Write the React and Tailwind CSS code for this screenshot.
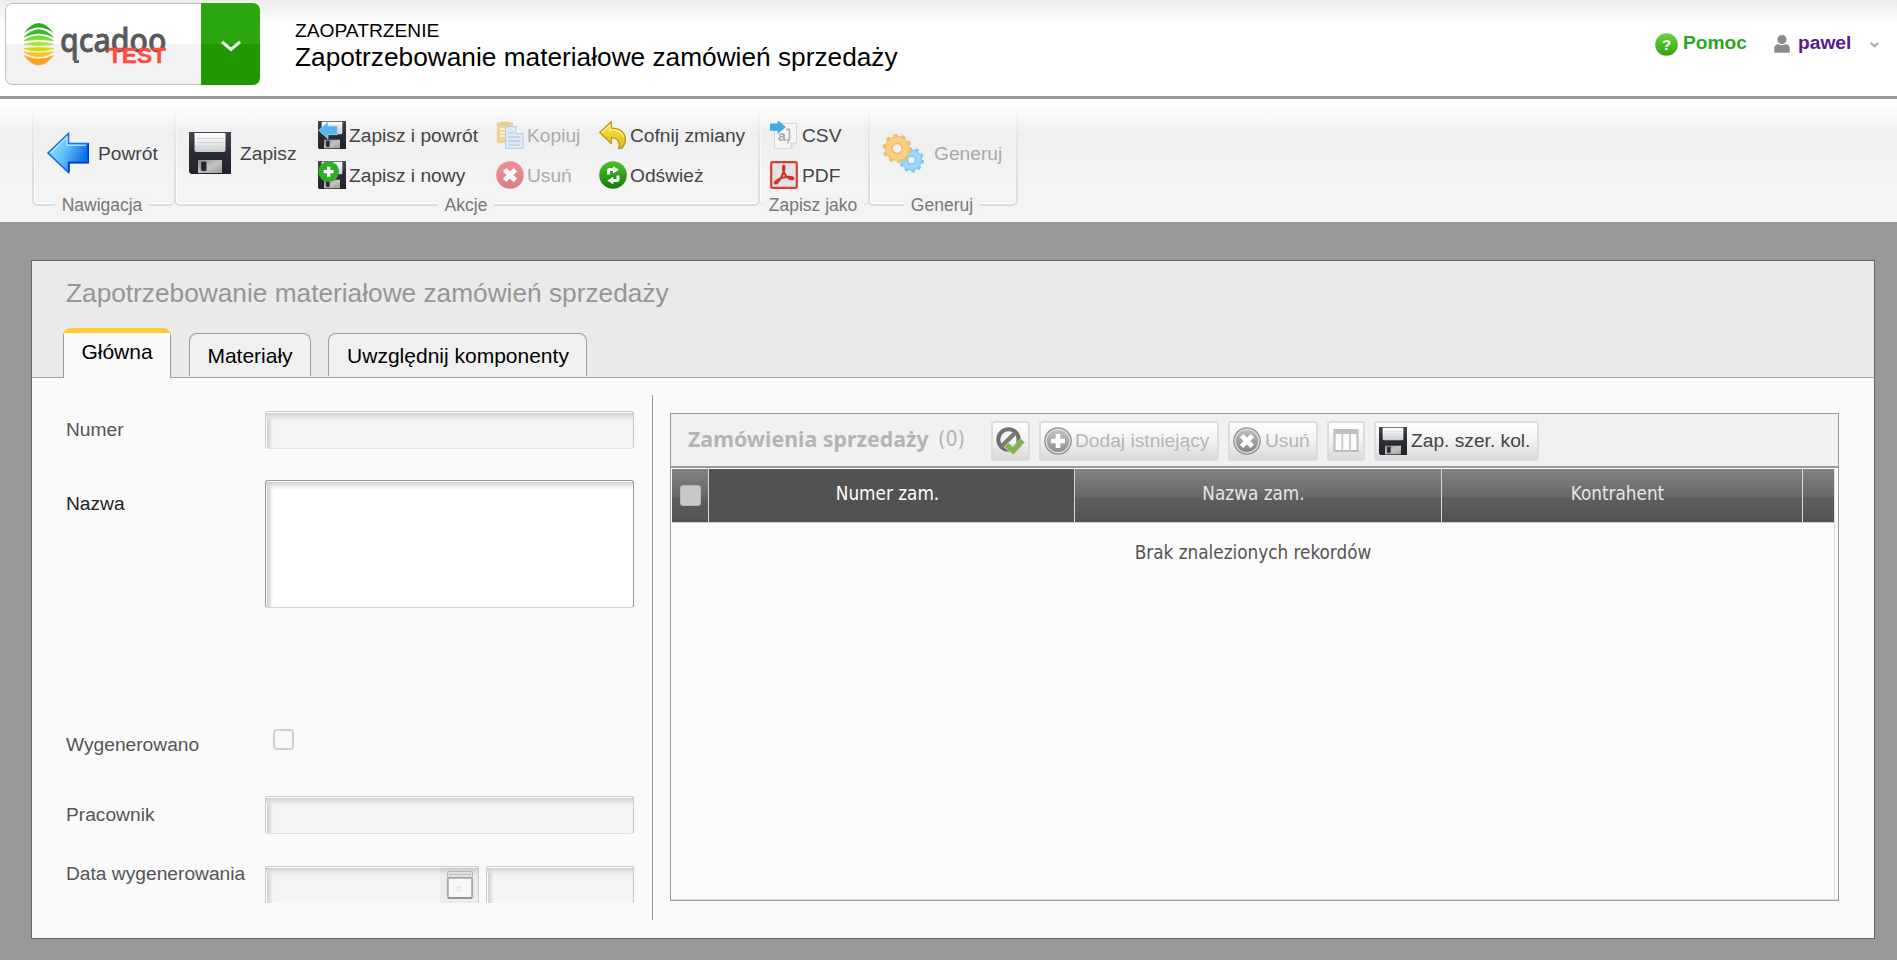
import React from "react";

function FloppyIcon({ size, children }) {
  return (
    <svg width={size} height={size} viewBox="0 0 42 42" className="shrink-0">
      <defs>
        <linearGradient id="fbody" x1="0" y1="0" x2="0" y2="1">
          <stop offset="0" stopColor="#43464e" />
          <stop offset="0.45" stopColor="#2b2e37" />
          <stop offset="1" stopColor="#20222c" />
        </linearGradient>
        <linearGradient id="flabel" x1="0" y1="0" x2="0" y2="1">
          <stop offset="0" stopColor="#ffffff" />
          <stop offset="0.5" stopColor="#ededef" />
          <stop offset="1" stopColor="#c9ccd1" />
        </linearGradient>
        <linearGradient id="fmetal" x1="0" y1="0" x2="1" y2="1">
          <stop offset="0" stopColor="#8a8a8a" />
          <stop offset="0.5" stopColor="#c4c4c4" />
          <stop offset="1" stopColor="#9a9a9a" />
        </linearGradient>
      </defs>
      <path d="M0 0H42V42H2L0 40Z" fill="url(#fbody)" />
      <path d="M5.500 1H36.500V18Q36.500 20 34.500 20H7.500Q5.500 20 5.500 18Z" fill="url(#flabel)" />
      <path d="M8 6.500H35M8 10.500H35M8 14.500H35" stroke="#d3d5d9" strokeWidth="1" />
      <path d="M9 28H33V41H9Z" fill="url(#fmetal)" />
      <rect x="12" y="29.500" width="5.500" height="9.500" rx="1" fill="#23252e" stroke="#777" strokeWidth="0.800" />
      {children}
    </svg>
  );
}

function BackArrow() {
  return (
    <svg width="42" height="42" viewBox="0 0 42 42" className="shrink-0">
      <defs>
        <linearGradient id="barrow" x1="0" y1="0" x2="1" y2="0.400">
          <stop offset="0" stopColor="#a5e2ff" />
          <stop offset="0.500" stopColor="#63c4fa" />
          <stop offset="1" stopColor="#0b6fe6" />
        </linearGradient>
      </defs>
      <path d="M1 21L21.500 1.500V11.500H41.300V30.500H21.500V40.500Z" fill="url(#barrow)" stroke="#1270e4" strokeWidth="1.600" />
      <path d="M3.500 21L20 5V13.200H39" fill="none" stroke="#c4ecff" strokeWidth="1.400" opacity="0.800" />
      <path d="M41.200 11V30.600H22V40" fill="none" stroke="#0839cf" strokeWidth="1.600" />
    </svg>
  );
}

function CopyIcon() {
  return (
    <svg width="28" height="28" viewBox="0 0 28 28" className="shrink-0 opacity-55">
      <rect x="0.800" y="2" width="14.500" height="19" fill="#f0c24a" stroke="#d9a22d" />
      <rect x="4" y="0.600" width="8" height="4" fill="#e0a93a" />
      <path d="M3 8H12M3 11.500H12M3 15H12" stroke="#fff" strokeWidth="1.500" />
      <path d="M8.600 5.600H19L26 12.500V27.400H8.600Z" fill="#cfe6fb" stroke="#7fb0dc" />
      <path d="M19 5.600V12.500H26" fill="#fff" stroke="#7fb0dc" />
      <path d="M11.500 12H17M11.500 16H23M11.500 20H23M11.500 24H23" stroke="#8cb8e0" strokeWidth="1.600" />
    </svg>
  );
}

function RoundIcon({ kind }) {
  const tones = {
    delete: ["#e8545c", "#c9303d"],
    refresh: ["#4cc22f", "#147d0a"],
    grayAdd: ["#c6c6c6", "#8c8c8c"],
    grayDelete: ["#c0c0c0", "#828282"],
  };
  const [a, b] = tones[kind];
  const gray = kind === "grayAdd" || kind === "grayDelete";
  return (
    <svg width="28" height="28" viewBox="0 0 28 28" className={kind === "delete" ? "shrink-0 opacity-60" : "shrink-0"}>
      <defs>
        <linearGradient id={"rnd" + kind} x1="0" y1="0" x2="0" y2="1">
          <stop offset="0" stopColor={a} />
          <stop offset="1" stopColor={b} />
        </linearGradient>
      </defs>
      <circle cx="14" cy="14" r="13.800" fill={gray ? "#8f8f8f" : "url(#rnd" + kind + ")"} />
      {gray && <circle cx="14" cy="14" r="11.800" fill={"url(#rnd" + kind + ")"} stroke="#dcdcdc" strokeWidth="1.400" />}
      {(kind === "delete" || kind === "grayDelete") && (
        <path d="M10.300 10.300L17.700 17.700M17.700 10.300L10.300 17.700" stroke="#fff" strokeWidth="4.800" strokeLinecap="square" />
      )}
      {kind === "grayAdd" && <path d="M14 7V21M7 14H21" stroke="#fff" strokeWidth="4.600" />}
      {kind === "refresh" && (
        <g fill="none" stroke="#fff" strokeWidth="3">
          <path d="M9.500 13.500V9.800Q9.500 8.600 11 8.600H14.500" />
          <path d="M19 14.500V18.200Q19 19.600 17.500 19.600H13.500" />
          <path d="M14 5.200L20 8.800L14 12.400Z" fill="#fff" stroke="none" />
          <path d="M14.300 15.800L8.300 19.500L14.300 23.200Z" fill="#fff" stroke="none" />
        </g>
      )}
    </svg>
  );
}

function UndoIcon() {
  return (
    <svg width="28" height="28" viewBox="0 0 28 28" className="shrink-0">
      <defs>
        <linearGradient id="undo" x1="0" y1="0" x2="0" y2="1">
          <stop offset="0" stopColor="#fbe94a" />
          <stop offset="1" stopColor="#e3b91a" />
        </linearGradient>
      </defs>
      <path
        d="M0.800 11.500L12.300 0.800V7.200C21 7.200 26.400 11.500 26.400 18.500C26.400 22 25 25 22.500 27.400H19.600C21.500 22 19.500 16.800 12.300 16.600V22.500Z"
        fill="url(#undo)"
        stroke="#bd9418"
        strokeWidth="1.300"
        strokeLinejoin="round"
      />
      <path d="M3 11.300L11 4V8.600C18 8.600 23.500 11 24.600 16" fill="none" stroke="#fff6a0" strokeWidth="1.100" />
    </svg>
  );
}

function CsvIcon() {
  return (
    <svg width="28" height="28" viewBox="0 0 28 28" className="shrink-0">
      <path d="M4.500 2.500H26.500V22L21 27.500H4.500Z" fill="#f6f6f6" stroke="#d8d8d8" />
      <path d="M26.500 22H21V27.500" fill="#e4e4e4" stroke="#d0d0d0" />
      <text x="8" y="19.500" fontFamily="Liberation Sans, Arial, sans-serif" fontWeight="bold" fontSize="14" fill="#a6aaae">a,</text>
      <path d="M16 8.500H19.500V19H17.500" fill="none" stroke="#b4b8bc" strokeWidth="1.800" />
      <path d="M0 2.500H7.500V-1L16 6L7.500 13V9.800H0Z" fill="#43abe1" />
    </svg>
  );
}

function PdfIcon() {
  return (
    <svg width="28" height="28" viewBox="0 0 28 28" className="shrink-0">
      <rect x="1.200" y="1.200" width="25.600" height="25.600" rx="1.500" fill="#e4e2e0" stroke="#dc3a33" strokeWidth="2.200" />
      <path
        d="M13.200 5.200C12 8.500 14.500 13.500 17.500 16.200C20 18.300 23 19 23.500 17.600C23.900 16 19 15.400 14.800 16.200C10.500 17 5.200 19.500 4.800 21.600C4.600 23.600 7.400 22.600 10 18.200C12.500 14 15 8.500 14.400 5.600C14.200 4.700 13.500 4.500 13.200 5.200Z"
        fill="none"
        stroke="#cf322c"
        strokeWidth="2"
      />
    </svg>
  );
}

function Gear({ cx, cy, r, fill, edge, hole }) {
  return (
    <g>
      <circle cx={cx} cy={cy} r={r} fill="none" stroke={edge} strokeWidth="4" strokeDasharray={`${(2 * Math.PI * r) / 20} ${(2 * Math.PI * r) / 20}`} />
      <circle cx={cx} cy={cy} r={(r + hole) / 2} fill="none" stroke={fill} strokeWidth={r - hole} />
      <circle cx={cx} cy={cy} r={r - 0.5} fill="none" stroke={edge} strokeWidth="1" />
      <circle cx={cx} cy={cy} r={hole} fill="none" stroke={edge} strokeWidth="1.4" />
    </g>
  );
}

function GearsIcon() {
  return (
    <svg width="42" height="42" viewBox="0 0 42 42" className="shrink-0">
      <Gear cx={28.5} cy={28} r={10.5} fill="#9ad9f8" edge="#7fc6ec" hole={4} />
      <Gear cx={14.2} cy={16.5} r={12.4} fill="#fad183" edge="#f0b968" hole={5} />
    </svg>
  );
}

function RibbonGroup({ label, className, frame, children }) {
  return (
    <div className={"relative flex h-[100px] " + className}>
      <div
        className={
          "pointer-events-none absolute inset-0 rounded-b-[5px] border-2 border-t-0 border-[#dcdcdc] [box-shadow:inset_1px_-1px_0_#fff] [mask-image:linear-gradient(to_bottom,transparent,#000_70%)] " +
          frame
        }
      />
      {children}
      <div className="absolute inset-x-0 -bottom-[9px] flex justify-center pr-[2px]">
        <span className="whitespace-nowrap bg-[#f3f3f3] px-[7px] text-[17.5px] leading-5 text-[#777]">{label}</span>
      </div>
    </div>
  );
}

function BigItem({ icon, label, className }) {
  return (
    <div className={"flex h-[42px] items-center text-[19.2px] text-[#444] " + className}>
      {icon}
      <span className="whitespace-nowrap pt-[2px]">{label}</span>
    </div>
  );
}

function SmallItem({ icon, label, muted, className }) {
  return (
    <div className={"flex h-7 items-center whitespace-nowrap text-[19.2px] " + (muted ? "text-[#ababab] " : "text-[#444] ") + className}>
      {icon}
      <span className="pt-[2px]">{label}</span>
    </div>
  );
}

function Field({ className, children }) {
  return (
    <div
      className={
        "rounded-[3px] border border-[#c9c9c9] border-b-[#e2e2e2] bg-[#f4f4f4] bg-[linear-gradient(to_bottom,#ffffff_1px,#d0d0d0_1px,rgba(226,226,226,0.7)_5px,transparent_9px),linear-gradient(to_right,#ffffff_0.5px,#cecece_1px,rgba(222,222,222,0.8)_4px,transparent_7px)] " +
        className
      }
    >
      {children}
    </div>
  );
}

function ToolButton({ className, children }) {
  return (
    <div
      className={
        "flex h-10 items-center whitespace-nowrap rounded-[3px] border-2 border-[#dcdcdc] bg-linear-to-b from-white via-[#f2f2f2] to-[#d9d9d9] text-[19.2px] " +
        className
      }
    >
      {children}
    </div>
  );
}

function HeadCell({ className, children }) {
  return (
    <div className={"flex h-[53px] justify-center pt-[13px] text-[18.75px] leading-6 " + className}>
      {children}
    </div>
  );
}

const HEAD_FILL =
  "bg-[linear-gradient(to_bottom,#828282,#686868_52%,#5e5e5e_54%,#525252)] text-[#e6e6e6] ";

export default function App() {
  return (
    <div className="flex h-[960px] w-[1897px] flex-col overflow-hidden bg-[#999] font-['Liberation_Sans',Arial,sans-serif]">
      <header className="flex h-[99px] shrink-0 border-b-[3px] border-[#999] bg-[linear-gradient(to_bottom,#ececec,#ffffff_24px)]">
        <div className="ml-[5px] mt-[3px] flex h-[82px] w-[255px] overflow-hidden rounded-[7px]">
          <div className="flex w-[196px] rounded-l-[7px] border border-r-0 border-[#bdbdbd] bg-[linear-gradient(to_bottom,#fff_50%,#f2f2f2_50%)]">
            <svg width="180" height="80" viewBox="6 4 180 80">
              <path d="M24 33Q38.750 13 53.500 33Q38.750 22 24 33Z" fill="#2cab1e" />
              <path d="M24 33.500L24 36.500Q38.750 22 53.500 36.500L53.500 34.500Q38.750 33 24 36.500Z" fill="none" />
              <path d="M24 37Q38.750 22 53.500 37Q38.750 30 24 37Z" fill="#3fb62b" stroke="#3fb62b" strokeWidth="0.500" />
              <path d="M24 40.500Q38.750 31 53.500 40.500Q38.750 38.500 24 40.500Z" fill="#72da33" stroke="#72da33" strokeWidth="0.800" />
              <path d="M24 44.500Q38.750 39.500 53.500 44.500Q38.750 46.500 24 44.500Z" fill="#b2e23a" stroke="#b2e23a" strokeWidth="0.800" />
              <path d="M24 48.500Q38.750 46.500 53.500 48.500Q38.750 53.500 24 48.500Z" fill="#d6d90f" stroke="#d6d90f" strokeWidth="0.800" />
              <path d="M24 52Q38.750 54 53.500 52Q38.750 61.500 24 52Z" fill="#f7c61c" stroke="#f7c61c" strokeWidth="0.800" />
              <path d="M24 55.500Q38.750 62.500 53.500 55.500Q38.750 74.500 24 55.500Z" fill="#ff9f1e" stroke="#ffab20" strokeWidth="0.500" />
              <text x="60" y="52" textLength="106.500" lengthAdjust="spacingAndGlyphs" fontFamily="Noto Sans, sans-serif" fontSize="33" fontWeight="500" fill="#58595b" stroke="#58595b" strokeWidth="0.800">
                qcadoo
              </text>
              <path d="M74 61.600H79" stroke="#58595b" strokeWidth="2.600" />
              <text x="108" y="63" textLength="58" lengthAdjust="spacingAndGlyphs" fontFamily="Liberation Sans, Arial, sans-serif" fontSize="22" fontWeight="bold" fill="#ff4a40" stroke="#ff4a40" strokeWidth="0.400">
                TEST
              </text>
            </svg>
          </div>
          <div className="flex w-[59px] items-center justify-center bg-[linear-gradient(to_bottom,#2ba60e_50%,#219800_50%)]">
            <svg width="22" height="12" viewBox="0 0 22 12" className="mt-1">
              <path d="M2 1.800L11 9.500L20 1.800" fill="none" stroke="#fff" strokeWidth="3" />
            </svg>
          </div>
        </div>
        <div className="ml-[35px] mt-[20px] flex flex-col text-black">
          <div className="text-[19.2px] leading-[21px]">ZAOPATRZENIE</div>
          <div className="text-[26.25px] leading-8">Zapotrzebowanie materiałowe zamówień sprzedaży</div>
        </div>
        <div className="ml-auto mt-[31px] flex h-6 items-center text-[19.2px] font-bold">
          <svg width="23" height="23" viewBox="0 0 23 23" className="mt-[3px]">
            <defs>
              <linearGradient id="help" x1="0" y1="0" x2="0" y2="1">
                <stop offset="0" stopColor="#6fcf3f" />
                <stop offset="1" stopColor="#35a313" />
              </linearGradient>
            </defs>
            <circle cx="11.500" cy="11.500" r="11.300" fill="url(#help)" />
            <text x="11.500" y="17" textAnchor="middle" fontFamily="Liberation Sans, Arial, sans-serif" fontSize="15" fontWeight="bold" fill="#fff">?</text>
          </svg>
          <span className="ml-[5px] w-[91px] text-[#2ba61c]">Pomoc</span>
          <svg width="16" height="18" viewBox="0 0 16 18" className="mt-[2px]">
            <circle cx="8" cy="4.600" r="4.600" fill="#8c8c8c" />
            <path d="M0.200 17.800V13Q0.200 10 4 9Q8 11.500 12 9Q15.800 10 15.800 13V17.800Z" fill="#8c8c8c" />
          </svg>
          <span className="ml-[8px] w-[72px] text-[#551a8b]">pawel</span>
          <svg width="9" height="6" viewBox="0 0 9 6" className="mr-[18px] mt-[3px]">
            <path d="M0.700 0.800L4.500 4.300L8.300 0.800" fill="none" stroke="#aaa" strokeWidth="2" />
          </svg>
        </div>
      </header>

      <nav className="flex h-[123px] shrink-0 bg-[linear-gradient(to_bottom,#fff,#f8f8f8_18px,#efefef_34px,#f4f4f4_90px,#f4f4f4)] pl-[32px] pt-[7px]">
        <RibbonGroup label="Nawigacja" className="w-[142px]" frame="border-r-0">
          <BigItem className="ml-[15px] mt-[26px] gap-[9px]" icon={<BackArrow />} label="Powrót" />
        </RibbonGroup>
        <RibbonGroup label="Akcje" className="w-[586px]" frame="">
          <BigItem className="ml-[15px] mt-[26px] w-[129px] gap-[9px]" icon={<FloppyIcon size={42} />} label="Zapisz" />
          <div className="mt-[15px] flex w-[179px] flex-col gap-3">
            <SmallItem
              className="gap-[3px]"
              label="Zapisz i powrót"
              icon={
                <FloppyIcon size={28}>
                  <path d="M1 14L15 1V7.500H29V20.500H15V27Z" fill="#54b7ee" stroke="#b5e4fb" strokeWidth="1" />
                </FloppyIcon>
              }
            />
            <SmallItem
              className="gap-[3px]"
              label="Zapisz i nowy"
              icon={
                <FloppyIcon size={28}>
                  <circle cx="16" cy="16" r="15.500" fill="#2fae27" />
                  <path d="M16 8.500V23.500M8.500 16H23.500" stroke="#fff" strokeWidth="5" />
                </FloppyIcon>
              }
            />
          </div>
          <div className="mt-[15px] flex w-[102px] flex-col gap-3">
            <SmallItem className="gap-[2px]" muted label="Kopiuj" icon={<CopyIcon />} />
            <SmallItem className="-ml-px gap-[3px]" muted label="Usuń" icon={<RoundIcon kind="delete" />} />
          </div>
          <div className="mt-[15px] flex flex-col gap-3">
            <SmallItem className="gap-[3px]" label="Cofnij zmiany" icon={<UndoIcon />} />
            <SmallItem className="gap-[3px]" label="Odśwież" icon={<RoundIcon kind="refresh" />} />
          </div>
        </RibbonGroup>
        <RibbonGroup label="Zapisz jako" className="w-[108px]" frame="border-x-0">
          <div className="ml-[10px] mt-[15px] flex flex-col gap-3">
            <SmallItem className="gap-[4px]" label="CSV" icon={<CsvIcon />} />
            <SmallItem className="gap-[4px]" label="PDF" icon={<PdfIcon />} />
          </div>
        </RibbonGroup>
        <RibbonGroup label="Generuj" className="w-[150px]" frame="">
          <BigItem className="ml-[15px] mt-[26px] gap-[9px] text-[#a8a8a8]!" icon={<GearsIcon />} label="Generuj" />
        </RibbonGroup>
      </nav>

      <main className="ml-[31px] mt-[38px] flex h-[679px] w-[1844px] flex-col border border-[#666] bg-[#fafafa]">
        <div className="flex h-[117px] shrink-0 flex-col border-b border-[#a3a3a3] bg-[#eaeaea] pt-[16px]">
          <h1 className="ml-[34px] text-[26.25px] leading-8 text-[#969696]">Zapotrzebowanie materiałowe zamówień sprzedaży</h1>
          <div className="ml-[31px] mt-[19px] flex items-start whitespace-nowrap text-[21px] leading-6 text-black">
            <div className="z-10 flex h-[50px] w-[108px] flex-col overflow-hidden rounded-t-[8px]">
              <div className="h-[5px] bg-[#ffca32]" />
              <div className="flex flex-1 justify-center border-x border-[#999] bg-[#fafafa] pt-[7px]">Główna</div>
            </div>
            <div className="ml-[18px] mt-[5px] flex h-[43px] w-[122px] justify-center rounded-t-[8px] border border-b-0 border-[#a0a0a0] bg-[#f0f0f0] pt-[10px]">
              Materiały
            </div>
            <div className="ml-[17px] mt-[5px] flex h-[43px] w-[259px] justify-center rounded-t-[8px] border border-b-0 border-[#a0a0a0] bg-[#f0f0f0] pl-px pt-[10px]">
              Uwzględnij komponenty
            </div>
          </div>
        </div>

        <div className="flex flex-1">
          <section className="mt-[17px] flex h-[525px] w-[621px] flex-col border-r border-[#999] pl-[34px] pt-[16px] text-[19.2px] leading-6 text-[#555]">
            <div className="flex h-[69px]">
              <span className="w-[199px] pt-[7px]">Numer</span>
              <Field className="h-[38px] w-[369px]" />
            </div>
            <div className="flex h-[249px]">
              <span className="w-[199px] pt-[12px] text-[#222]">Nazwa</span>
              <Field className="h-[128px] w-[369px] border-[#999]! border-b-[#d4d4d4]! bg-white!" />
            </div>
            <div className="flex h-[67px]">
              <span className="w-[207px] pt-[4px]">Wygenerowano</span>
              <div className="size-[21px] rounded-[4px] border-2 border-[#d0d0d0] bg-[#f9f9f9]" />
            </div>
            <div className="flex h-[70px]">
              <span className="w-[199px] pt-[7px]">Pracownik</span>
              <Field className="h-[38px] w-[369px]" />
            </div>
            <div className="flex">
              <span className="w-[199px] -mt-[4px]">Data wygenerowania</span>
              <Field className="flex h-[37px] w-[214px] justify-end rounded-b-none border-b-0">
                <div className="flex w-[38px] justify-center bg-black/[0.03] pt-[3px] pl-[2px]">
                  <svg width="28" height="30" viewBox="0 0 28 30">
                    <rect x="1.500" y="1.500" width="25" height="6" rx="1" fill="#dedede" stroke="#b8b8b8" />
                    <path d="M3 4.500H25" stroke="#c0c0c0" />
                    <rect x="1.800" y="7.800" width="24.400" height="20" rx="1" fill="#f8f8f8" stroke="#a8a8a8" strokeWidth="1.800" />
                    <path d="M2 28H26" stroke="#8c8c8c" strokeWidth="1.600" />
                    <rect x="11" y="17" width="4" height="4" fill="#f4f4f4" stroke="#e0e0e0" />
                  </svg>
                </div>
              </Field>
              <Field className="ml-[7px] h-[37px] w-[148px] rounded-b-none border-b-0" />
            </div>
          </section>

          <section className="ml-[17px] mt-[35px] flex h-[488px] w-[1169px] flex-col border border-[#999] bg-[#fbfbfb] font-['DejaVu_Sans_Condensed','Noto_Sans',sans-serif]">
            <div className="flex h-[54px] shrink-0 border-b-2 border-[#999] bg-[#f1f1f1] pl-[17px] pt-[7px] text-[#b4b4b4]">
              <div className="flex w-[303px] whitespace-nowrap pt-[6px] text-[21.25px] leading-6">
                <span className="w-[250px] font-bold font-['Noto_Sans',sans-serif] tracking-[0.05px]">Zamówienia sprzedaży</span>
                <span>(0)</span>
              </div>
              <div className="flex gap-[9px] font-['Liberation_Sans',Arial,sans-serif]">
                <ToolButton className="w-[39px] justify-center">
                  <svg width="29" height="28" viewBox="0 0 29 28">
                    <circle cx="12.500" cy="12.500" r="10.200" fill="none" stroke="#6f6f6f" strokeWidth="4" />
                    <path d="M5.500 19.500L19.500 5.500" stroke="#7b7b7b" strokeWidth="4.500" />
                    <path d="M8 20L12.500 16L17 20L24.500 11.500L28.500 15.500L17.500 27.500Z" fill="#85b056" stroke="#b4d094" strokeWidth="1" />
                  </svg>
                </ToolButton>
                <ToolButton className="w-[180px] gap-[3px] pl-[3px] text-[#b5b5b5]">
                  <RoundIcon kind="grayAdd" />
                  <span>Dodaj istniejący</span>
                </ToolButton>
                <ToolButton className="w-[90px] gap-[4px] pl-[3px] text-[#b5b5b5]">
                  <RoundIcon kind="grayDelete" />
                  <span>Usuń</span>
                </ToolButton>
                <ToolButton className="w-[38px] justify-center">
                  <svg width="26" height="28" viewBox="0 0 26 28">
                    <rect x="1.500" y="3" width="23" height="21" fill="#fcfcfc" stroke="#bcbcc0" strokeWidth="2" />
                    <rect x="1" y="2.500" width="24" height="4.500" fill="#c0c0c6" />
                    <path d="M9.300 7V24M17 7V24" stroke="#c8c8cb" strokeWidth="1.800" />
                  </svg>
                </ToolButton>
                <ToolButton className="w-[165px] gap-[4px] pl-[3px] text-[#444]">
                  <FloppyIcon size={28} />
                  <span>Zap. szer. kol.</span>
                </ToolButton>
              </div>
            </div>
            <div className="flex flex-1 flex-col border-b border-l border-[#ddd] border-l-white pt-px">
              <div className="flex min-h-0 w-[1163px] flex-1 flex-col border-r border-[#ddd]">
                <div className="flex border-b border-[#ccc]">
                  <HeadCell className={HEAD_FILL + "w-[37px] border-r border-[#d8d8d8]"}>
                    <div className="mt-[3px] size-[21px] rounded-[3px] border border-[#b4b4b4] bg-[#c8c8c8]" />
                  </HeadCell>
                  <HeadCell className="w-[366px] border-r border-[#d8d8d8] bg-[#525252] pr-[8px] text-white">Numer zam.</HeadCell>
                  <HeadCell className={HEAD_FILL + "w-[367px] border-r border-[#d8d8d8] pr-[9px]"}>Nazwa zam.</HeadCell>
                  <HeadCell className={HEAD_FILL + "w-[361px] border-r border-[#d8d8d8] pr-[9px]"}>Kontrahent</HeadCell>
                  <HeadCell className={HEAD_FILL + "flex-1"} />
                </div>
                <div className="flex justify-center pt-[18px] text-[18.75px] leading-6 text-[#555]">Brak znalezionych rekordów</div>
              </div>
            </div>
          </section>
        </div>
      </main>
    </div>
  );
}
